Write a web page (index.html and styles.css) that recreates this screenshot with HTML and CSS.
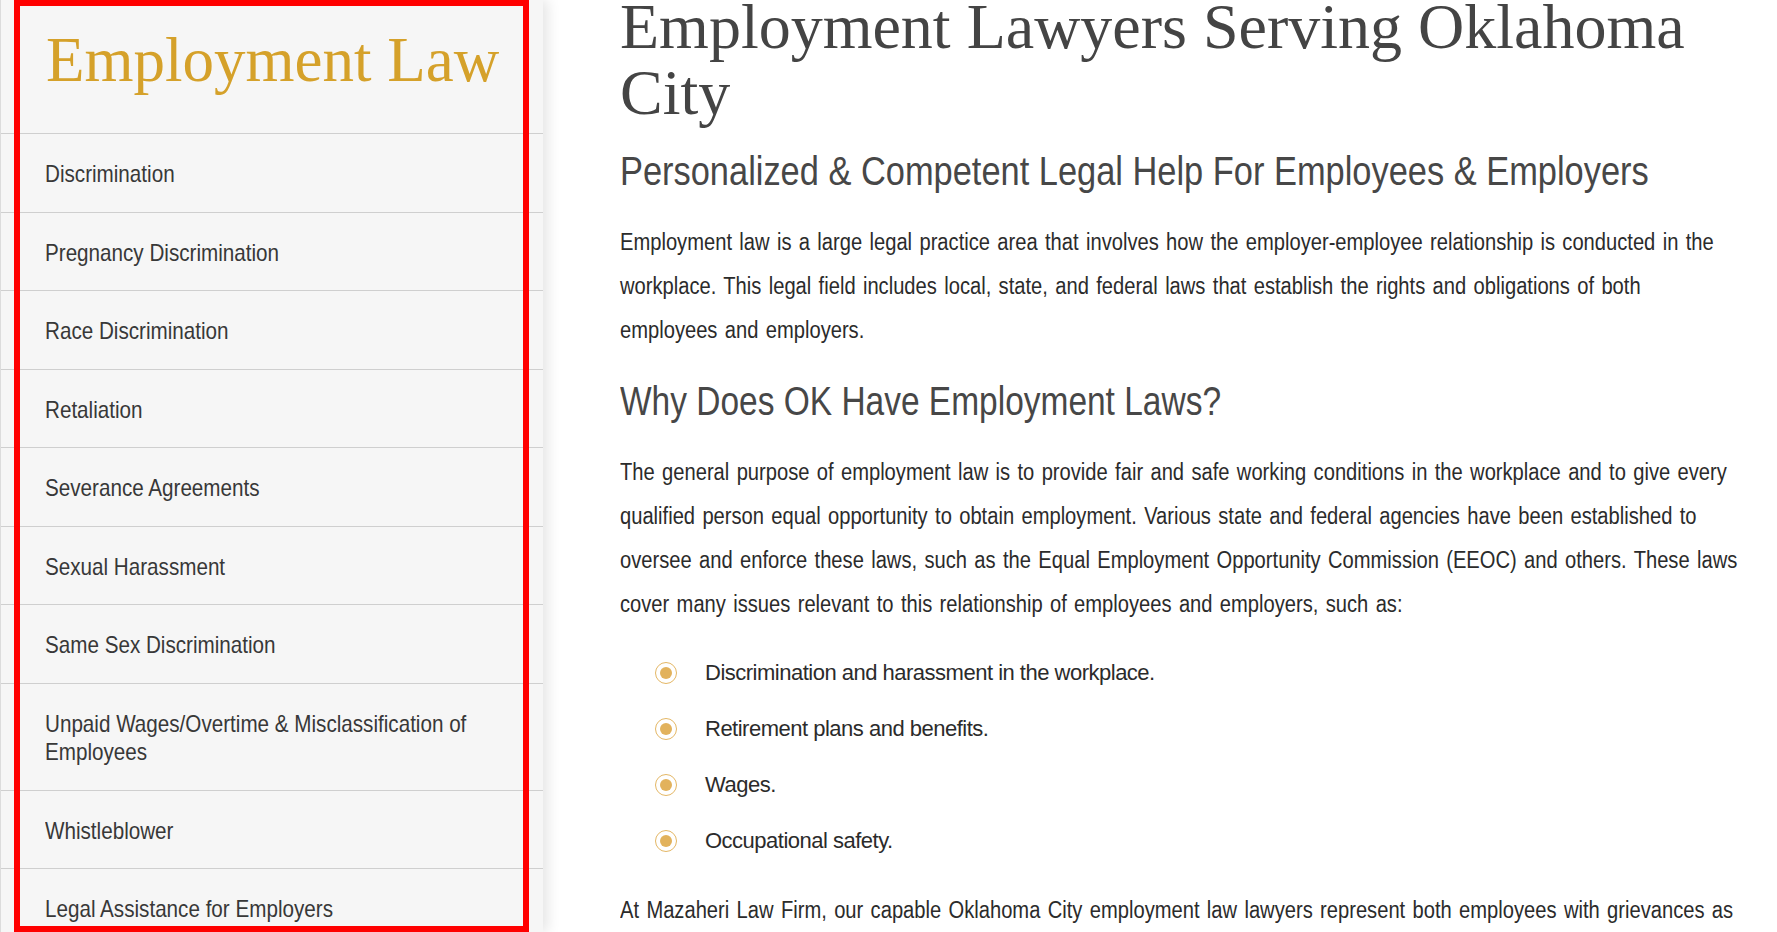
FILE: index.html
```html
<!DOCTYPE html>
<html lang="en">
<head>
<meta charset="utf-8">
<title>Employment Law</title>
<link rel="stylesheet" href="styles.css">
</head>
<body>
<div class="page">
  <aside class="sidebar">
    <div class="side-title">Employment Law</div>
    <ul class="side-nav">
      <li><a href="#">Discrimination</a></li>
      <li><a href="#">Pregnancy Discrimination</a></li>
      <li><a href="#">Race Discrimination</a></li>
      <li><a href="#">Retaliation</a></li>
      <li><a href="#">Severance Agreements</a></li>
      <li><a href="#">Sexual Harassment</a></li>
      <li><a href="#">Same Sex Discrimination</a></li>
      <li><a href="#">Unpaid Wages/Overtime &amp; Misclassification of Employees</a></li>
      <li><a href="#">Whistleblower</a></li>
      <li><a href="#">Legal Assistance for Employers</a></li>
    </ul>
  </aside>
  <div class="highlight"></div>
  <main class="content">
    <h1>Employment Lawyers Serving Oklahoma City</h1>
    <h2>Personalized &amp; Competent Legal Help For Employees &amp; Employers</h2>
    <p>Employment law is a large legal practice area that involves how the employer-employee relationship is conducted in the workplace. This legal field includes local, state, and federal laws that establish the rights and obligations of both employees and employers.</p>
    <h3>Why Does OK Have Employment Laws?</h3>
    <p>The general purpose of employment law is to provide fair and safe working conditions in the workplace and to give every qualified person equal opportunity to obtain employment. Various state and federal agencies have been established to oversee and enforce these laws, such as the Equal Employment Opportunity Commission (EEOC) and others. These laws cover many issues relevant to this relationship of employees and employers, such as:</p>
    <ul class="bullets">
      <li><span class="dot"></span><span>Discrimination and harassment in the workplace.</span></li>
      <li><span class="dot"></span><span>Retirement plans and benefits.</span></li>
      <li><span class="dot"></span><span>Wages.</span></li>
      <li><span class="dot"></span><span>Occupational safety.</span></li>
    </ul>
    <p>At Mazaheri Law Firm, our capable Oklahoma City employment law lawyers represent both employees with grievances as well as employers who need guidance on compliance with the law.</p>
  </main>
</div>
</body>
</html>
```
FILE: styles.css
```css
html, body {
  margin: 0;
  padding: 0;
  background: #ffffff;
}
body {
  height: 932px;
  overflow: hidden;
}
.page {
  position: relative;
  display: flex;
  align-items: flex-start;
  height: 932px;
}
.sidebar {
  flex: 0 0 542px;
  width: 542px;
  height: 932px;
  background: #f6f6f6;
  border-left: 1px solid #dcdcdc;
  box-shadow: 5px 0 12px rgba(0, 0, 0, 0.10);
  position: relative;
  z-index: 1;
  overflow: hidden;
}
.side-title {
  font-family: "Liberation Serif", "Times New Roman", serif;
  font-size: 63px;
  line-height: 76px;
  color: #d5a12a;
  padding: 22px 0 35px 45px;
  white-space: nowrap;
}
.side-nav {
  list-style: none;
  margin: 0;
  padding: 0;
}
.side-nav li {
  border-top: 1px solid #cfcfcf;
  padding: 26px 40px 23px 44px;
  font-family: "Liberation Sans", Arial, sans-serif;
  font-size: 24px;
  line-height: 28.5px;
}
.side-nav a {
  display: block;
  width: calc(100% / 0.86);
  transform: scaleX(0.86);
  transform-origin: 0 0;
  color: #383838;
  text-decoration: none;
}
.highlight {
  position: absolute;
  left: 14px;
  top: 0;
  width: 515px;
  height: 932px;
  border: 6px solid #ff0000;
  box-sizing: border-box;
  z-index: 2;
  pointer-events: none;
}
.content {
  width: 1138px;
  margin-left: 77px;
  color: #2b2b2b;
  font-family: "Liberation Sans", Arial, sans-serif;
  font-size: 22px;
  line-height: 44px;
}
.content h1 {
  font-family: "Liberation Serif", "Times New Roman", serif;
  font-weight: normal;
  font-size: 64px;
  line-height: 66px;
  color: #444444;
  margin: -6px 0 0 0;
}
.content h2,
.content h3 {
  font-family: "Liberation Sans", Arial, sans-serif;
  font-weight: normal;
  font-size: 40px;
  line-height: 48px;
  color: #474747;
  margin: 21px 0 0 0;
  white-space: nowrap;
  transform-origin: 0 0;
}
.content h2 {
  transform: scaleX(0.86);
}
.content h3 {
  margin-top: 25px;
  transform: scaleX(0.837);
}
.content p {
  width: 1278px;
  margin: 25px 0 0 0;
  font-size: 23px;
  word-spacing: 2px;
  transform: scaleX(0.876);
  transform-origin: 0 0;
}
.bullets {
  list-style: none;
  margin: 25px 0 0 0;
  padding: 0 0 0 35px;
}
.bullets li {
  display: flex;
  align-items: center;
  gap: 28px;
  margin-bottom: 12px;
  letter-spacing: -0.5px;
}
.bullets li:last-child {
  margin-bottom: 0;
}
.dot {
  flex: 0 0 22px;
  width: 22px;
  height: 22px;
  border: 1.5px solid #e4b765;
  border-radius: 50%;
  box-sizing: border-box;
  display: flex;
  align-items: center;
  justify-content: center;
}
.dot::before {
  content: "";
  width: 12px;
  height: 12px;
  border-radius: 50%;
  background: #e2b25c;
}
```
